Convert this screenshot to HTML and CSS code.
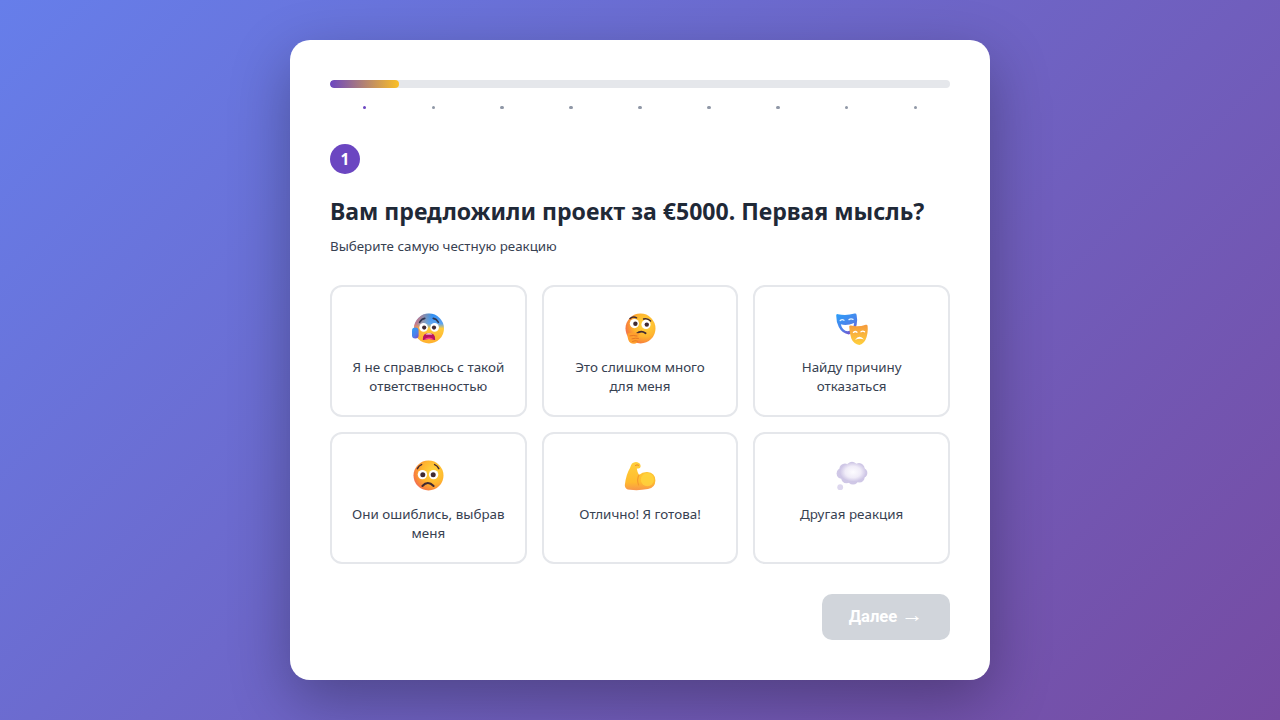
FILE: index.html
```html
<!DOCTYPE html>
<html lang="ru">
<head>
<meta charset="utf-8">
<title>Квиз</title>
<link rel="stylesheet" href="styles.css">
</head>
<body>
<svg class="defs" width="0" height="0" aria-hidden="true">
  <defs>
    <radialGradient id="face" cx="0.66" cy="0.38" r="0.72">
      <stop offset="0" stop-color="#ffd83e"/><stop offset="0.55" stop-color="#ffb52e"/><stop offset="0.85" stop-color="#f9843a"/><stop offset="1" stop-color="#ee6a5a"/>
    </radialGradient>
    <linearGradient id="fear" x1="0" y1="0" x2="0" y2="1">
      <stop offset="0" stop-color="#2a8cf5"/><stop offset="0.34" stop-color="#5fa4ee"/><stop offset="0.5" stop-color="#ffcb3c"/><stop offset="1" stop-color="#ffb02e"/>
    </linearGradient>
    <linearGradient id="fearEdge" x1="0" y1="0.3" x2="1" y2="0.7">
      <stop offset="0" stop-color="#ee5a6a" stop-opacity=".8"/><stop offset="0.45" stop-color="#ffb02e" stop-opacity="0"/>
    </linearGradient>
    <linearGradient id="blue" x1="0" y1="0" x2="0.6" y2="1">
      <stop offset="0" stop-color="#2aa0fa"/><stop offset="0.7" stop-color="#4f7fe8"/><stop offset="1" stop-color="#7058d0"/>
    </linearGradient>
    <linearGradient id="orange" x1="0" y1="0" x2="0" y2="1">
      <stop offset="0" stop-color="#f59a3c"/><stop offset="1" stop-color="#ffd03d"/>
    </linearGradient>
    <linearGradient id="arm" x1="0" y1="0" x2="0" y2="1">
      <stop offset="0" stop-color="#ffcf3a"/><stop offset="0.72" stop-color="#ffbb2e"/><stop offset="1" stop-color="#f8964a"/>
    </linearGradient>
    <radialGradient id="cloudHi" cx="0.5" cy="0.5" r="0.5">
      <stop offset="0" stop-color="#fdfcff"/><stop offset="0.6" stop-color="#f0ecf8"/><stop offset="1" stop-color="#f0ecf8" stop-opacity="0"/>
    </radialGradient>
  </defs>
</svg>
<main class="card">
  <div class="progress"><div class="progress-fill"></div></div>
  <div class="dots">
    <span class="dot"><i class="pip pip-active"></i></span>
    <span class="dot"><i class="pip"></i></span>
    <span class="dot"><i class="pip"></i></span>
    <span class="dot"><i class="pip"></i></span>
    <span class="dot"><i class="pip"></i></span>
    <span class="dot"><i class="pip"></i></span>
    <span class="dot"><i class="pip"></i></span>
    <span class="dot"><i class="pip"></i></span>
    <span class="dot"><i class="pip"></i></span>
  </div>
  <div class="badge">1</div>
  <h1 class="title">Вам предложили проект за €5000. Первая мысль?</h1>
  <p class="subtitle">Выберите самую честную реакцию</p>
  <div class="options">
    <div class="option">
      <svg class="emoji" viewBox="0 0 32 32">
        <circle cx="17" cy="15.5" r="15" fill="url(#fear)"/>
        <circle cx="17" cy="15.5" r="15" fill="url(#fearEdge)"/>
        <path d="M7.6 9.4 Q9.6 5.8 12.8 5.4 M21.2 5.4 Q24.4 5.8 26.4 9.4" fill="none" stroke="#2f3550" stroke-width="1.6" stroke-linecap="round"/>
        <circle cx="11.6" cy="14.4" r="4.3" fill="#fff"/><circle cx="22.6" cy="14.4" r="4.3" fill="#fff"/>
        <circle cx="12.2" cy="14.6" r="2.1" fill="#402a32"/><circle cx="22" cy="14.6" r="2.1" fill="#402a32"/>
        <path d="M10.8 26.4 Q10.8 20 17 20 Q23.2 20 23.2 26.4 Q23 27.4 21.4 26.8 Q17 25.4 12.6 26.8 Q11 27.4 10.8 26.4Z" fill="#b8145f"/>
        <path d="M12 26.6 Q17 22.2 22 26.6 Q17 25.2 12 26.6Z" fill="#ff3f8e"/>
        <path d="M13.4 21.4 H20.6 Q19.2 20.2 17 20.2 Q14.8 20.2 13.4 21.4Z" fill="#fff"/>
        <rect x="0" y="14.6" width="6.6" height="11" rx="3.3" fill="url(#blue)"/>
      </svg>
      <span class="label">Я не справлюсь с такой ответственностью</span>
    </div>
    <div class="option">
      <svg class="emoji" viewBox="0 0 32 32">
        <circle cx="16.5" cy="15.5" r="15" fill="url(#face)"/>
        <path d="M6 5.6 Q9 2.8 12.6 4.8 M19.6 6 Q23.6 4.8 26.6 8" fill="none" stroke="#402a32" stroke-width="1.5" stroke-linecap="round"/>
        <circle cx="10.4" cy="10.6" r="4.6" fill="#fff"/><circle cx="22" cy="11.4" r="4.6" fill="#fff"/>
        <circle cx="11.4" cy="10.8" r="2.2" fill="#402a32"/><circle cx="22.8" cy="11.6" r="2.2" fill="#402a32"/>
        <path d="M12.6 20.6 Q17 16.8 21.6 20.2" fill="none" stroke="#402a32" stroke-width="1.8" stroke-linecap="round"/>
        <path d="M3.4 20.4 Q8.6 19.2 15.4 20.4 Q16.4 22.4 14 22.8 L13 23 Q15.2 23.8 14.4 25.4 Q15.4 27.2 13.4 28 Q13.4 30.8 10 30.8 Q5.6 30.8 4.2 26.4 Q3.4 23.6 3.4 20.4Z" fill="#ffa02e"/>
        <path d="M6 22.8 Q9.6 22 13 23 M8 25.8 Q11.4 24.8 14.4 25.4 M8.6 28.4 Q11 27.2 13.4 28" fill="none" stroke="#d9661f" stroke-width=".7" stroke-linecap="round"/>
      </svg>
      <span class="label">Это слишком много<br>для меня</span>
    </div>
    <div class="option">
      <svg class="emoji" viewBox="0 0 32 32">
        <path d="M0.2 2.4 Q0.4 0.8 2 1.2 Q10 3 18.6 0.6 Q20.4 0.2 20.6 2 Q21.8 7.4 20.6 12 Q18.8 19.8 12.8 21.4 Q6 20.4 2.8 14 Q0.2 8.6 0.2 2.4Z" fill="url(#blue)"/>
        <path d="M4.2 7.6 Q6 6 8 7.2 M13 6.6 Q15 5.2 17 6.4" fill="none" stroke="#e2f2ff" stroke-width="1.3" stroke-linecap="round"/>
        <path d="M4.8 11.2 Q10.6 13 18.2 10 Q17.2 17.8 11.8 18.2 Q6.4 18 4.8 11.2Z" fill="#fff"/>
        <path d="M13.2 13.6 Q13.4 12.2 15 12.6 Q22 14.4 29.8 11.8 Q31.4 11.4 31.6 13 Q32.2 19.4 30.6 24 Q28.8 30.4 23.4 32 Q17.8 31.4 15.4 25.8 Q13.4 19.6 13.2 13.6Z" fill="url(#orange)"/>
        <path d="M17.4 19.4 Q19.2 17.8 21 19.2 M25 18.8 Q26.8 17.6 28.6 18.8" fill="none" stroke="#fff" stroke-width="1.3" stroke-linecap="round"/>
        <path d="M19 27 Q23.4 20.6 28 26.4 Q23.4 24.8 19 27Z" fill="#fff"/>
      </svg>
      <span class="label">Найду причину<br>отказаться</span>
    </div>
    <div class="option">
      <svg class="emoji" viewBox="0 0 32 32">
        <circle cx="16.5" cy="15.5" r="15" fill="url(#face)"/>
        <path d="M5.4 8.6 Q6.8 5.6 9.6 4.6 M22.6 4.6 Q25.4 5.6 26.8 8.6" fill="none" stroke="#402a32" stroke-width="1.5" stroke-linecap="round"/>
        <circle cx="10.4" cy="14.6" r="4.7" fill="#fff"/><circle cx="21.6" cy="14.6" r="4.7" fill="#fff"/>
        <circle cx="10.8" cy="14.8" r="2.5" fill="#402a32"/><circle cx="21.2" cy="14.8" r="2.5" fill="#402a32"/>
        <path d="M10.4 26 Q15.8 20 21.6 26" fill="none" stroke="#402a32" stroke-width="2" stroke-linecap="round"/>
      </svg>
      <span class="label">Они ошиблись, выбрав меня</span>
    </div>
    <div class="option">
      <svg class="emoji" viewBox="0 0 32 32">
        <path d="M8 3.6 Q10.6 1.4 13.4 2.2 Q16.8 3.2 16.6 6.4 Q16.4 8.8 13.6 8.4 L12.8 8.8 Q13.2 11.8 15 15 Q18.6 11.6 23.4 12 Q31.2 12.6 31.4 20.4 Q31.2 27.8 24 29 Q15 30.8 6 29.8 Q0.8 29.4 0.8 25.2 Q2 14.4 6 8 Q6.8 5.2 8 3.6Z" fill="url(#arm)"/>
        <path d="M11.4 5.4 Q13 4.2 14.6 5.2" fill="none" stroke="#e8862a" stroke-width="1" stroke-linecap="round"/>
        <path d="M15 15 Q12.4 19.6 14.6 25" fill="none" stroke="#f59a2d" stroke-width="1.2" stroke-linecap="round"/>
        <ellipse cx="23.4" cy="19.6" rx="6.6" ry="6.6" fill="#ffd83e" opacity=".7"/>
      </svg>
      <span class="label">Отлично! Я готова!</span>
    </div>
    <div class="option">
      <svg class="emoji" viewBox="0 0 32 32">
        <g fill="#cfc7e6">
          <circle cx="9" cy="9" r="5.6"/><circle cx="16" cy="7.4" r="5.6"/><circle cx="23" cy="8.6" r="5.6"/>
          <circle cx="26.4" cy="13" r="5"/><circle cx="6" cy="13.4" r="5.4"/>
          <circle cx="10.4" cy="18" r="5.2"/><circle cx="17" cy="19" r="5.6"/><circle cx="23.4" cy="17.4" r="5.2"/>
          <circle cx="16" cy="13" r="8"/>
        </g>
        <ellipse cx="17" cy="12" rx="13" ry="9.6" fill="url(#cloudHi)"/>
        <circle cx="4.2" cy="27.2" r="2.9" fill="#ddd7ee"/>
      </svg>
      <span class="label">Другая реакция</span>
    </div>
  </div>
  <div class="actions"><button class="next" type="button">Далее <span class="arrow">→</span></button></div>
</main>
</body>
</html>
```
FILE: styles.css
```css
* { box-sizing: border-box; }
html, body { height: 100%; }
body {
  margin: 0;
  height: 720px;
  overflow: hidden;
  display: flex;
  align-items: center;
  justify-content: center;
  background: linear-gradient(135deg, #667eea 0%, #764ba2 100%);
  font-family: "Noto Sans", "Open Sans", sans-serif;
  color: #1f2937;
}
.defs { position: absolute; }
.card {
  width: 700px;
  height: 640px;
  padding: 40px;
  background: #fff;
  border-radius: 20px;
  box-shadow: 0 20px 60px rgba(0, 0, 0, 0.3);
}
.progress { height: 8px; background: #e5e7eb; border-radius: 4px; overflow: hidden; }
.progress-fill { width: 11.11%; height: 100%; border-radius: 4px; background: linear-gradient(90deg, #6b46c1, #fbbf24); }
.dots { display: flex; margin-top: 17.5px; height: 3.5px; }
.dot { flex: 1; display: flex; justify-content: center; }
.pip { width: 3.5px; height: 3.5px; border-radius: 50%; background: #8f97a6; }
.pip-active { background: #6b46c1; }
.badge {
  width: 30px; height: 30px; margin-top: 35px;
  display: flex; align-items: center; justify-content: center;
  border-radius: 50%;
  background: #6b46c1; color: #fff;
  font-size: 15.5px; font-weight: 700;
}
.title { margin: 19px 0 0; font-size: 23.05px; line-height: 36px; font-weight: 700; color: #1f2937; }
.subtitle { margin: 7px 0 0; font-size: 13.35px; line-height: 20px; color: #374151; }
.options { display: grid; grid-template-columns: repeat(3, 1fr); gap: 15px; margin-top: 29px; }
.option {
  height: 132px;
  padding: 26px 15px 0;
  border: 2px solid #e5e7eb;
  border-radius: 12px;
  display: flex; flex-direction: column; align-items: center;
  text-align: center;
  background: #fff;
}
.emoji { width: 32px; height: 32px; display: block; flex: none; }
.label { margin-top: 13px; font-size: 13.4px; line-height: 19px; color: #374151; }
.actions { display: flex; justify-content: flex-end; margin-top: 30px; }
.next {
  width: 128px; height: 46px;
  border: 0; border-radius: 10px;
  background: #d1d5db; color: #fff;
  font-family: Roboto, sans-serif;
  font-size: 16.6px; font-weight: 700;
  line-height: 20px;
}
.arrow { font-family: "Liberation Sans", sans-serif; font-size: 22px; line-height: 0; font-weight: 400; }
```
